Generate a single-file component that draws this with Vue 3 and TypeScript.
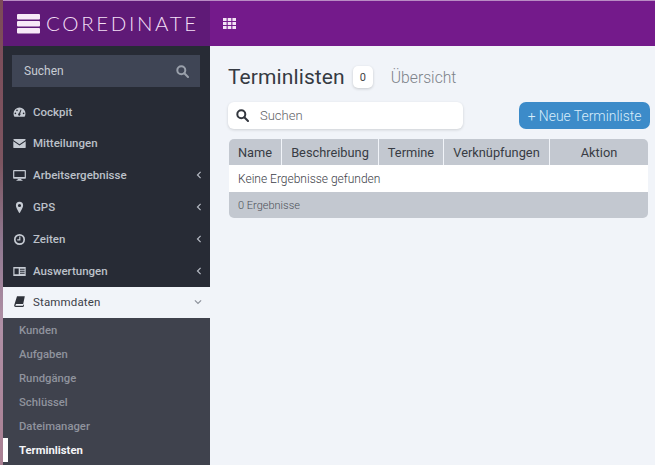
<script setup lang="ts">
interface Item { label: string; icon: string; arrow?: boolean }
const items: Item[] = [
  { label: 'Cockpit', icon: 'gauge' },
  { label: 'Mitteilungen', icon: 'mail' },
  { label: 'Arbeitsergebnisse', icon: 'desktop', arrow: true },
  { label: 'GPS', icon: 'pin', arrow: true },
  { label: 'Zeiten', icon: 'clock', arrow: true },
  { label: 'Auswertungen', icon: 'card', arrow: true },
]
const subs = ['Kunden', 'Aufgaben', 'Rundgänge', 'Schlüssel', 'Dateimanager']
const cols = ['Name', 'Beschreibung', 'Termine', 'Verknüpfungen', 'Aktion']
</script>

<template>
  <div class="page">
    <div class="strip"></div>
    <div class="main">
      <header class="top">
        <div class="brand">
          <svg class="logo" width="24" height="20" viewBox="0 0 24 20">
            <rect x="0" y="0" width="23" height="5.4" rx="1" fill="#f7e9f7" />
            <rect x="0" y="7" width="23" height="5.4" rx="1" fill="#f7e9f7" />
            <rect x="0" y="14" width="23" height="5.4" rx="1" fill="#f7e9f7" />
          </svg>
          <span class="brand-name">COREDINATE</span>
        </div>
        <div class="bar">
          <svg width="13" height="11" viewBox="0 0 13 11">
            <g fill="#f3e3f5">
              <rect x="0" y="0" width="3.6" height="3" /><rect x="4.7" y="0" width="3.6" height="3" /><rect x="9.4" y="0" width="3.6" height="3" />
              <rect x="0" y="4" width="3.6" height="3" /><rect x="4.7" y="4" width="3.6" height="3" /><rect x="9.4" y="4" width="3.6" height="3" />
              <rect x="0" y="8" width="3.6" height="3" /><rect x="4.7" y="8" width="3.6" height="3" /><rect x="9.4" y="8" width="3.6" height="3" />
            </g>
          </svg>
        </div>
      </header>
      <div class="body">
        <aside class="side">
          <div class="side-search">
            <span>Suchen</span>
            <svg width="13" height="13" viewBox="0 0 13 13" fill="none" stroke="#9aa0ab" stroke-width="2">
              <circle cx="5.3" cy="5.3" r="4" /><path d="M8.3 8.3l3.7 3.7" stroke-linecap="round" />
            </svg>
          </div>
          <nav class="nav">
            <a v-for="it in items" :key="it.label" class="nav-item">
              <svg class="ico" width="13" height="13" viewBox="0 0 13 13" fill="#c6cbd3">
                <g v-if="it.icon === 'gauge'">
                  <path fill-rule="evenodd" d="M6.5 1.5A6 6 0 0 0 .5 7.5c0 1.2.3 2.3.9 3.2h10.2c.6-.9.9-2 .9-3.2a6 6 0 0 0-6-6zM6 7.2 7.7 3.4l.8.3L7.2 7.6a1.2 1.2 0 1 1-1.2-.4zM2.4 8.2a.8.8 0 1 1 0-1.6.8.8 0 0 1 0 1.6zM4 5.2a.8.8 0 1 1 0-1.6.8.8 0 0 1 0 1.6zM10.6 8.2a.8.8 0 1 1 0-1.6.8.8 0 0 1 0 1.6z" />
                </g>
                <g v-else-if="it.icon === 'mail'">
                  <path d="M1.2 2h10.6c.5 0 .9.4.9.9L6.5 7.2.3 2.9c0-.5.4-.9.9-.9z" />
                  <path d="M.3 4.2 6.5 8.5l6.2-4.300v6c0 .5-.4.9-.9.9H1.2a.9.9 0 0 1-.9-.9z" />
                </g>
                <g v-else-if="it.icon === 'desktop'">
                  <path fill-rule="evenodd" d="M.9 1h11.200c.4 0 .8.4.8.8v7.200c0 .4-.4.8-.8.8H.9a.8.8 0 0 1-.8-.8V1.800c0-.4.4-.8.8-.8zm.4 1.200v5.900h10.400V2.200z" />
                  <path d="M4.800 9.800h3.400l.3 1.300h1v.7H3.500v-.7h1z" />
                </g>
                <path v-else-if="it.icon === 'pin'" fill-rule="evenodd" d="M6.500.8A3.600 3.600 0 0 0 2.900 4.400c0 2.400 3.600 7.800 3.600 7.800s3.600-5.400 3.600-7.800A3.600 3.600 0 0 0 6.500.8zm0 5.300a1.600 1.600 0 1 1 0-3.200 1.600 1.600 0 0 1 0 3.200z" />
                <g v-else-if="it.icon === 'clock'">
                  <circle cx="6.500" cy="6.500" r="4.700" fill="none" stroke="#c6cbd3" stroke-width="1.700" />
                  <path d="M6.800 3.500v3.400H4.200" fill="none" stroke="#c6cbd3" stroke-width="1.200" />
                </g>
                <path v-else fill-rule="evenodd" d="M.3 2h12.400v9H.3zm1.200 1.500v5.800h4.200V3.500zM7 3.700v1h4.600v-1zm0 2v1h4.600v-1zm0 2v1h4.600v-1z" />
              </svg>
              <span class="nav-label">{{ it.label }}</span>
              <svg v-if="it.arrow" width="6" height="8" viewBox="0 0 6 8" fill="none" stroke="#b4b9c2" stroke-width="1.200"><path d="M4.600.9 1.500 4l3.100 3.100" /></svg>
            </a>
          </nav>
          <a class="open-item">
            <svg class="ico" width="13" height="13" viewBox="0 0 13 13" fill="#2f333b">
              <path d="M4 1.200h7.800L10.200 9H3.200L2.300 10.300c0 .3.300.5.600.5h7l.4-1.400.8.300-.7 2.200H2.700c-1 0-1.700-.7-1.500-1.600z" />
            </svg>
            <span class="nav-label">Stammdaten</span>
            <svg width="8" height="6" viewBox="0 0 8 6" fill="none" stroke="#8d929b" stroke-width="1.200"><path d="M.9 1.400 4 4.500l3.100-3.100" /></svg>
          </a>
          <ul class="subs">
            <li v-for="s in subs" :key="s">{{ s }}</li>
            <li class="current">Terminlisten</li>
          </ul>
        </aside>
        <main class="content">
          <div class="heading">
            <h1>Terminlisten</h1>
            <span class="count">0</span>
            <span class="crumb">Übersicht</span>
          </div>
          <div class="tools">
            <div class="search">
              <svg width="13" height="13" viewBox="0 0 13 13" fill="none" stroke="#33373f" stroke-width="2">
                <circle cx="5.300" cy="5.300" r="4" /><path d="M8.300 8.300l3.700 3.700" stroke-linecap="round" />
              </svg>
              <span>Suchen</span>
            </div>
            <button class="new" type="button">+ Neue Terminliste</button>
          </div>
          <div class="table">
            <div class="thead">
              <div v-for="c in cols" :key="c" class="th">{{ c }}</div>
            </div>
            <div class="empty">Keine Ergebnisse gefunden</div>
            <div class="tfoot">0 Ergebnisse</div>
          </div>
        </main>
      </div>
    </div>
  </div>
</template>

<style>
html, body { margin: 0; padding: 0; background: #f1f4f9; overflow: hidden; }
</style>

<style scoped>
.page { display: flex; width: 655px; height: 465px; overflow: hidden; font-family: Roboto, "Liberation Sans", sans-serif; }
.strip { width: 3px; flex: none; background: linear-gradient(180deg, #7d4a58 0%, #7c5560 35%, #8f7890 52%, #b090a6 70%, #a97f92 100%); }
.main { flex: 1; min-width: 0; display: flex; flex-direction: column; }
.top { height: 46px; flex: none; display: flex; background: #741a8b; border-top: 1px solid #b98cc4; box-sizing: border-box; }
.brand { width: 207px; flex: none; display: flex; align-items: center; gap: 5px; padding-left: 14px; box-sizing: border-box; background: #5f1a77; color: #f3dff5; }
.logo { flex: none; }
.brand-name { font-family: Lato, Roboto, sans-serif; font-weight: 300; font-size: 20.5px; letter-spacing: 2.65px; line-height: 1; }
.bar { flex: 1; display: flex; align-items: center; padding-left: 13px; margin-top: -1px; }
.body { flex: 1; display: flex; min-height: 0; }
.side { width: 207px; flex: none; background: #272b35; display: flex; flex-direction: column; }
.side-search { margin: 9px 10px 0 9px; height: 32px; flex: none; background: #3f4555; color: #c8ccd3; font-size: 12px; display: flex; align-items: center; justify-content: space-between; padding: 0 11px 0 12px; }
.nav { padding-top: 10px; display: flex; flex-direction: column; }
.nav-item { height: 32px; display: flex; align-items: center; padding: 0 8px 0 10px; color: #bcc1c9; font-size: 11.5px; font-weight: 500; }
.nav-item:first-child { height: 30px; }
.ico { flex: none; margin-right: 7px; }
.nav-label { flex: 1; }
.open-item { height: 31px; flex: none; display: flex; align-items: center; padding: 0 8px 2px 10px; box-sizing: border-box; background: #f1f4f9; color: #3c4048; font-size: 11.5px; font-weight: 400; letter-spacing: .15px; }
.subs { list-style: none; margin: 0; padding: 0; background: #3f424d; flex: 1; color: #8f939d; font-size: 11.3px; font-weight: 500; }
.subs li { height: 24px; line-height: 26px; padding-left: 16px; box-sizing: border-box; }
.subs li.current { color: #f4f5f7; font-weight: 700; border-left: 5px solid #fff; padding-left: 11px; }
.content { flex: 1; min-width: 0; padding: 0 5px 0 18px; background: #f1f4f9; }
.heading { display: flex; align-items: center; height: 32px; margin-top: 15px; }
h1 { margin: 0; font-size: 21px; font-weight: 400; color: #353a42; letter-spacing: .1px; }
.count { margin-left: 8px; width: 20px; height: 22px; background: #fff; border-radius: 5px; box-shadow: 0 1px 3px rgba(0,0,0,.18); font-size: 11px; color: #444; display: flex; align-items: center; justify-content: center; }
.crumb { margin-left: 18px; font-size: 15.7px; font-weight: 300; color: #7d8289; }
.tools { display: flex; justify-content: space-between; align-items: center; margin-top: 9px; }
.search { width: 235px; height: 27px; background: #fff; border-radius: 6px; box-shadow: 0 1px 3px rgba(0,0,0,.15); display: flex; align-items: center; gap: 11px; padding-left: 8px; box-sizing: border-box; font-size: 13px; font-weight: 300; color: #5f6368; }
.new { width: 131px; height: 27px; border: 0; padding: 0; border-radius: 7px; background: #3c8bc9; color: #d8eefb; font-family: inherit; font-size: 13.9px; font-weight: 300; }
.table { margin: 10px 0 0 1px; width: 419px; border-radius: 5px; overflow: hidden; }
.thead { display: grid; grid-template-columns: 52px 97px 65px 106px 99px; height: 26px; background: #c3c8d0; }
.th { display: flex; align-items: center; justify-content: center; font-size: 12.8px; color: #383c44; border-left: 1px solid #f1f4f9; }
.th:first-child { border-left: 0; }
.empty { height: 27px; background: #fff; display: flex; align-items: center; padding-left: 9px; font-size: 12px; font-weight: 300; color: #3c4048; }
.tfoot { height: 26px; background: #c3c8d0; display: flex; align-items: center; padding-left: 9px; font-size: 11px; font-weight: 300; color: #4c5159; }
</style>
